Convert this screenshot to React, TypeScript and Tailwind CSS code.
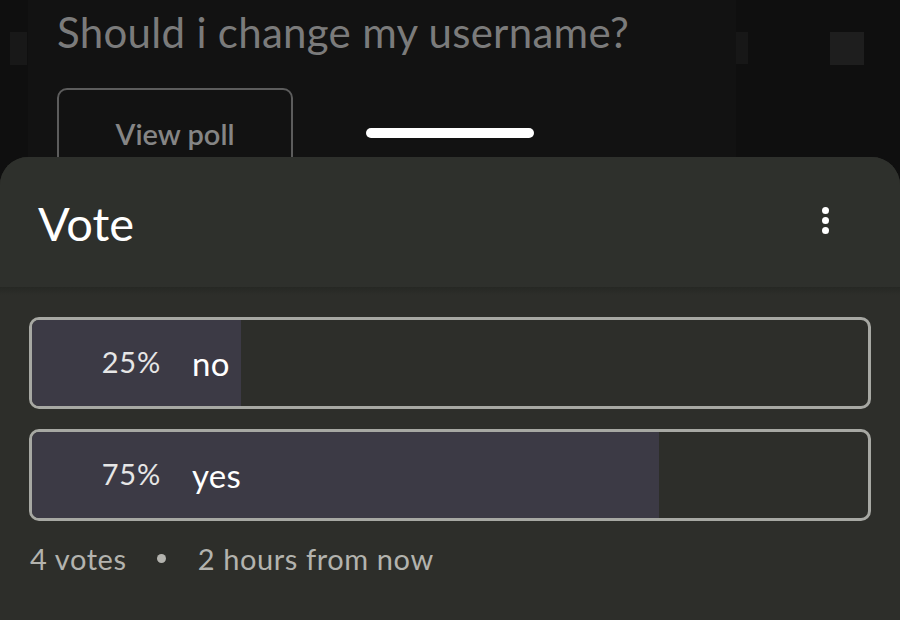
import React from "react";

const options = [
  { pct: 25, label: "no" },
  { pct: 75, label: "yes" },
];

export default function App() {
  return (
    <div
      className="w-[900px] h-[620px] bg-[#0f0f0f] overflow-hidden flex flex-col"
      style={{ fontFamily: "Lato, 'Noto Sans', sans-serif" }}
    >
      {/* background page */}
      <div className="relative h-[157px] shrink-0 flex overflow-hidden">
        <div className="w-[28px] shrink-0 pt-[32px] pl-[10px]">
          <div className="w-[17px] h-[33px] bg-[#181818]" />
        </div>
        <div className="w-[708px] shrink-0 bg-[#121212] pl-[29px] pt-[8px]">
          <div className="text-[42px] leading-[48px] text-[#7b7b7b] tracking-[0.3px]">
            Should i change my username?
          </div>
          <div className="mt-[32px] w-[236px] h-[90px] rounded-[10px] border-2 border-[#5c5c5c] flex justify-center pt-[26px]">
            <span className="text-[29px] leading-[36px] text-[#858585] font-semibold">View poll</span>
          </div>
        </div>
        <div className="w-[12px] shrink-0 pt-[32px]">
          <div className="w-[12px] h-[32px] bg-[#171717]" />
        </div>
        <div className="w-[82px] shrink-0" />
        <div className="w-[34px] shrink-0 pt-[32px]">
          <div className="w-[34px] h-[33px] bg-[#1e1e1e]" />
        </div>
        <div className="absolute left-[366px] top-[128px] w-[168px] h-[10px] rounded-full bg-white" />
      </div>

      {/* bottom sheet */}
      <div className="flex-1 bg-[#2d2e2a] rounded-t-[28px] flex flex-col">
        <div className="h-[130px] shrink-0 flex items-center justify-between pl-[38px] pr-[71px] bg-[#2e302c] rounded-t-[28px]">
          <span className="text-[47px] leading-[54px] text-white mt-[2px]">Vote</span>
          <div className="flex flex-col gap-[3px] -mt-[4px]">
            <span className="w-[7px] h-[7px] rounded-full bg-white" />
            <span className="w-[7px] h-[7px] rounded-full bg-white" />
            <span className="w-[7px] h-[7px] rounded-full bg-white" />
          </div>
        </div>
        <div className="h-[8px] shrink-0 bg-gradient-to-b from-[#262824] to-[#2d2e2a]" />
        <div className="px-[29px] pt-[22px] flex flex-col gap-[20px]">
          {options.map((o) => (
            <div
              key={o.label}
              className="relative h-[92px] rounded-[10px] border-[3px] border-[#a7a8a3] overflow-hidden bg-[#2d2e2a]"
            >
              <div className="absolute left-0 top-0 bottom-0 bg-[#3c3a45]" style={{ width: `${o.pct}%` }} />
              <div className="relative h-full flex items-center">
                <span className="w-[129px] text-right text-[29px] text-[#e6e6e6] tracking-[0.8px] -mt-[2px]">{o.pct}%</span>
                <span className="ml-[31px] text-[33px] text-white mt-[2px] tracking-[0.3px]">{o.label}</span>
              </div>
            </div>
          ))}
        </div>
        <div className="px-[30px] mt-[16px] flex items-center text-[29px] text-[#b3b3ae] tracking-[0.6px]">
          <span>4 votes</span>
          <span className="ml-[30px] w-[9px] h-[9px] rounded-full bg-[#b3b3ae]" />
          <span className="ml-[32px]">2 hours from now</span>
        </div>
      </div>
    </div>
  );
}
